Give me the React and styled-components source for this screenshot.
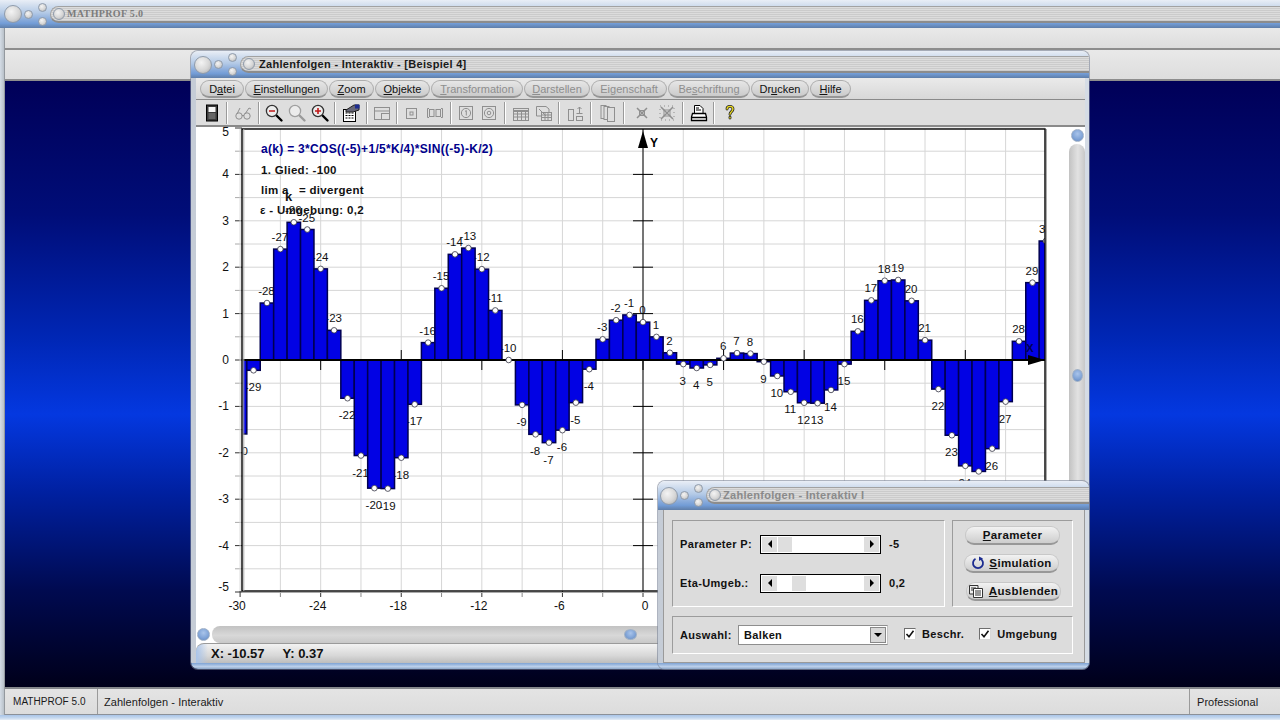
import React from "react";
import styled, { createGlobalStyle } from "styled-components";

const Global = createGlobalStyle`
  html, body { margin: 0; padding: 0; background: #000; }
  body { font-family: "Liberation Sans", Arial, sans-serif; }
`;

const stripes = `repeating-linear-gradient(180deg, #dcdcdc 0, #dcdcdc 1px, #cbcbcb 1px, #cbcbcb 2px)`;

const Screen = styled.div`
  position: relative;
  width: 1280px;
  height: 720px;
  overflow: hidden;
  display: flex;
  flex-direction: column;
  background: #d0d8e2;
`;

const TitleWrap = styled.div`
  flex: none;
  height: ${(p) => p.$h}px;
  display: flex;
  align-items: center;
  padding-left: ${(p) => p.$pad}px;
  box-sizing: border-box;
  background: linear-gradient(180deg, #e9eef6 0, #d3dfef 18%, #b4cae6 45%, #86a9da 72%, #729cd6 84%, #5f7ea8 100%);
  ${(p) => p.$round && "border-radius: 7px 7px 0 0;"}
`;

const Balls = styled.div`
  flex: none;
  display: flex;
  align-items: center;
  gap: 5px;
`;

const Ball = styled.span`
  display: block;
  flex: none;
  width: ${(p) => p.$s}px;
  height: ${(p) => p.$s}px;
  margin-right: ${(p) => p.$mr || 0}px;
  border-radius: 50%;
  box-sizing: border-box;
  border: 1px solid #8f9bab;
  background: radial-gradient(circle at 40% 35%, #f4f4f4 0, #d6d6d6 55%, #a9a9a9 100%);
`;

const BallPair = styled.div`
  display: flex;
  flex-direction: column;
  gap: 5px;
`;

const Bar = styled.div`
  flex: 1;
  height: 17px;
  margin-left: 3px;
  border-radius: 9px 0 0 9px;
  border: 1px solid #a2a2a2;
  border-bottom: 2px solid #8c8c8c;
  border-right: none;
  box-sizing: border-box;
  display: flex;
  align-items: center;
  padding-left: 2px;
  gap: ${(p) => p.$gap}px;
  background: ${stripes};
`;

const TitleText = styled.span`
  font-weight: bold;
  font-size: ${(p) => p.$size || 11}px;
  color: ${(p) => p.$color};
  letter-spacing: ${(p) => p.$ls || 0.3}px;
  font-family: ${(p) => (p.$serif ? '"Liberation Serif", serif' : '"Liberation Sans", sans-serif')};
  white-space: nowrap;
`;

function TitleBar({ h, pad, round, gap, text, color, size, ls, serif }) {
  return (
    <TitleWrap $h={h} $pad={pad} $round={round}>
      <Balls>
        <Ball $s={18} $mr={-3} />
        <Ball $s={9} />
        <BallPair>
          <Ball $s={9} />
          <Ball $s={9} />
        </BallPair>
      </Balls>
      <Bar $gap={gap}>
        <Ball $s={12} />
        <TitleText $color={color} $size={size} $ls={ls} $serif={serif}>{text}</TitleText>
      </Bar>
    </TitleWrap>
  );
}

const Body = styled.div`
  flex: 1;
  min-height: 0;
  display: flex;
`;

const LeftEdge = styled.div`
  width: 5px;
  flex: none;
  background: linear-gradient(90deg, #d4dce6, #bcc4cc 70%, #7f8388);
`;

const Column = styled.div`
  flex: 1;
  min-width: 0;
  display: flex;
  flex-direction: column;
`;

const MainRow = styled.div`
  flex: none;
  height: ${(p) => p.$h}px;
  box-sizing: border-box;
  background: linear-gradient(180deg, #e9e9e9, #dddddd);
  border-bottom: 2px solid #8d8d8d;
`;

const Desktop = styled.div`
  flex: 1;
  background: linear-gradient(180deg, #000058 0, #000d78 22%, #0026b4 42%, #0438e0 55%, #0020a0 68%, #000a50 84%, #00001a 100%);
`;

const StatusBar = styled.div`
  flex: none;
  height: 28px;
  box-sizing: border-box;
  display: flex;
  align-items: center;
  border-top: 2px solid #85888c;
  border-bottom: 1px solid #8b9098;
  background: linear-gradient(180deg, #e4e4e4, #dcdcdc);
  font-size: 11px;
  letter-spacing: 0.05px;
  color: #1a1a1a;
`;

const StatusCell = styled.div`
  box-sizing: border-box;
  padding-left: ${(p) => p.$pad}px;
  width: ${(p) => (p.$w ? `${p.$w}px` : "auto")};
  flex: ${(p) => (p.$w ? "none" : 1)};
  height: 100%;
  display: flex;
  align-items: center;
  font-size: ${(p) => p.$size || 11}px;
  border-right: ${(p) => (p.$line ? "1px solid #9a9a9a" : "none")};
`;

const BottomStrip = styled.div`
  flex: none;
  height: 5px;
  background: linear-gradient(180deg, #a9c5e8, #c6d8ee 60%, #e6edf6);
`;

const Win = styled.div`
  position: absolute;
  left: 191px;
  top: 51px;
  width: 898px;
  height: 618px;
  display: flex;
  flex-direction: column;
  border-radius: 7px;
  overflow: hidden;
  box-shadow: 0 0 0 1px rgba(120, 130, 150, 0.6);
`;

const WinBody = styled.div`
  flex: 1;
  min-height: 0;
  display: flex;
  flex-direction: column;
  padding: 0 4px 0 5px;
  background: linear-gradient(90deg, #c5ccd6, #d5dce5);
`;

const WinBottom = styled.div`
  flex: none;
  height: 6px;
  background: linear-gradient(180deg, #7ea3d4, #bcd0ea 60%, #8ba6c8);
`;

const MenuRow = styled.div`
  flex: none;
  height: 22px;
  box-sizing: border-box;
  padding: 2px 0 2px 4px;
  display: flex;
  gap: 1px;
  background: linear-gradient(180deg, #eaeaea, #d8d8d8);
  border-bottom: 1px solid #8a8a8a;
`;

const MenuPill = styled.div`
  flex: none;
  width: ${(p) => p.$w}px;
  height: 18px;
  display: flex;
  align-items: center;
  justify-content: center;
  box-sizing: border-box;
  border-radius: 9px;
  font-size: 11px;
  color: ${(p) => (p.$off ? "#8e8e8e" : "#111")};
  border: 1px solid #adadad;
  border-bottom: 2px solid #969696;
  background: linear-gradient(180deg, #e6e6e6, #cbcbcb);
  u { text-underline-offset: 1px; }
`;

const ToolRow = styled.div`
  flex: none;
  height: 27px;
  box-sizing: border-box;
  padding-left: 4px;
  display: flex;
  align-items: center;
  background: #dedede;
  border-bottom: 2px solid #8a8a8a;
`;

const ToolSlot = styled.div`
  flex: none;
  width: ${(p) => p.$w}px;
  height: 22px;
  display: flex;
  align-items: center;
  justify-content: center;
`;

const ToolSep = styled.div`
  flex: none;
  width: 8px;
  height: 22px;
  display: flex;
  justify-content: center;
  &::after {
    content: "";
    width: 1px;
    background: #9a9a9a;
    border-right: 1px solid #fff;
  }
`;

const Client = styled.div`
  flex: 1;
  min-height: 0;
  display: flex;
`;

const ChartCol = styled.div`
  flex: 1;
  min-width: 0;
  display: flex;
  flex-direction: column;
  background: #fff;
`;

const ChartSvg = styled.svg`
  display: block;
  flex: none;
  font-family: "Liberation Sans", sans-serif;
`;

const VTrack = styled.div`
  flex: none;
  width: 16px;
  position: relative;
  background: #fff;
  &::before {
    content: "";
    position: absolute;
    left: 0;
    right: 0;
    top: 17px;
    bottom: 0;
    border-radius: 8px 8px 0 0;
    background: linear-gradient(90deg, #c2c2c2, #e2e2e2 55%, #c8c8c8);
  }
`;

const Knob = styled.span`
  position: absolute;
  left: ${(p) => p.$x}px;
  top: ${(p) => p.$y}px;
  width: ${(p) => p.$w}px;
  height: ${(p) => p.$h}px;
  border-radius: 50%;
  background: radial-gradient(circle at 50% 35%, #a9c4ea 0, #7ea2d6 60%, #6285b8 100%);
  border: 1px solid #9fb0c6;
  box-sizing: border-box;
`;

const HTrack = styled.div`
  flex: none;
  height: 17px;
  position: relative;
  background: #fff;
  &::before {
    content: "";
    position: absolute;
    left: 16px;
    right: 0;
    top: 0;
    bottom: 0;
    border-radius: 8px 0 0 8px;
    background: linear-gradient(180deg, #c2c2c2, #d8d8d8 55%, #c8c8c8);
  }
`;

const CoordBar = styled.div`
  flex: none;
  height: 20px;
  box-sizing: border-box;
  margin-right: -16px;
  padding-left: 15px;
  display: flex;
  align-items: center;
  gap: 18px;
  border-top: 1px solid #9a9a9a;
  border-radius: 8px 0 0 0;
  background:
    linear-gradient(90deg, #a9c4ea 0, rgba(169, 196, 234, 0) 12px),
    linear-gradient(180deg, #f2f2f2, #d8d8d8 60%, #bdbdbd);
  font-size: 13px;
  font-weight: bold;
  color: #111;
`;

const Dialog = styled.div`
  position: absolute;
  left: 658px;
  top: 481px;
  width: 431px;
  height: 188px;
  display: flex;
  flex-direction: column;
  border-radius: 7px;
  overflow: hidden;
  box-shadow: 0 0 0 1px rgba(120, 130, 150, 0.6);
`;

const DialogBody = styled.div`
  flex: 1;
  min-height: 0;
  margin: 0 4px 0 5px;
  padding: 10px 11px 8px 8px;
  display: flex;
  flex-direction: column;
  gap: 9px;
  background: #dcdcdc;
  box-sizing: border-box;
  border: 1px solid #9a9a9a;
  border-top: none;
  font-size: 11px;
  font-weight: bold;
  letter-spacing: 0.35px;
  color: #111;
`;

const DialogFrame = styled.div`
  flex: 1;
  min-height: 0;
  display: flex;
  flex-direction: column;
  background: linear-gradient(90deg, #c5ccd6, #d5dce5);
`;

const TopPanels = styled.div`
  display: flex;
  gap: 7px;
  height: 87px;
  flex: none;
`;

const Panel = styled.div`
  box-sizing: border-box;
  width: ${(p) => (p.$w ? `${p.$w}px` : "auto")};
  height: ${(p) => (p.$h ? `${p.$h}px` : "auto")};
  flex: ${(p) => (p.$w ? "none" : "1")};
  border: 1px solid #9c9c9c;
  border-right-color: #fff;
  border-bottom-color: #fff;
`;

const ParamPanel = styled(Panel)`
  display: flex;
  flex-direction: column;
  justify-content: center;
  gap: 21px;
  padding-left: 7px;
`;

const ParamRow = styled.div`
  display: flex;
  align-items: center;
  height: 18px;
`;

const ParamLabel = styled.span`
  width: 80px;
  flex: none;
`;

const SliderBox = styled.div`
  flex: none;
  width: 121px;
  height: 19px;
  box-sizing: border-box;
  border: 1px solid #000;
  background: #fff;
  display: flex;
  align-items: stretch;
  justify-content: space-between;
  position: relative;
`;

const SliderEnd = styled.span`
  width: 15px;
  margin: 1px;
  background: #dedede;
  display: flex;
  align-items: center;
  justify-content: center;
  &::after {
    content: "";
    border-top: 4px solid transparent;
    border-bottom: 4px solid transparent;
    ${(p) => (p.$right ? "border-left: 4px solid #000;" : "border-right: 4px solid #000;")}
  }
`;

const SliderThumb = styled.span`
  position: absolute;
  top: 1px;
  bottom: 1px;
  left: ${(p) => p.$at}px;
  width: 14px;
  background: #dedede;
`;

const ParamValue = styled.span`
  margin-left: 8px;
`;

const ButtonPanel = styled(Panel)`
  display: flex;
  flex-direction: column;
  align-items: center;
  justify-content: center;
  gap: 9px;
`;

const PillButton = styled.div`
  width: 95px;
  height: 19px;
  box-sizing: border-box;
  display: flex;
  align-items: center;
  justify-content: center;
  gap: 4px;
  border-radius: 9px;
  border: 1px solid #c8c8c8;
  border-bottom: 2px solid #989898;
  margin-left: ${(p) => p.$nudge || 0}px;
  background: linear-gradient(180deg, #f2f2f2, #cdcdcd);
  font-size: 11.5px;
`;

const PickPanel = styled(Panel)`
  display: flex;
  align-items: center;
  padding-left: 7px;
`;

const PickLabel = styled.span`
  width: 58px;
  flex: none;
`;

const Combo = styled.div`
  flex: none;
  width: 150px;
  height: 20px;
  box-sizing: border-box;
  border: 1px solid #8e8e8e;
  border-right-color: #c4c4c4;
  background: #fff;
  display: flex;
  align-items: center;
  justify-content: space-between;
  padding-left: 5px;
`;

const ComboArrow = styled.span`
  width: 16px;
  height: 16px;
  margin-right: 1px;
  box-sizing: border-box;
  border: 1px solid #888;
  background: #d8d8d8;
  display: flex;
  align-items: center;
  justify-content: center;
  &::after {
    content: "";
    border-left: 4px solid transparent;
    border-right: 4px solid transparent;
    border-top: 4px solid #000;
  }
`;

const CheckWrap = styled.label`
  display: flex;
  align-items: center;
  gap: 6px;
  margin-left: ${(p) => p.$ml}px;
  margin-top: -2px;
`;

const CheckBox = styled.span`
  width: 12px;
  height: 12px;
  box-sizing: border-box;
  display: flex;
  border: 1px solid #6e6e6e;
  border-right-color: #d8d8d8;
  border-bottom-color: #d8d8d8;
  background: #fff;
`;

// chart helpers: page coordinates go straight in the viewBox
const X0 = 643;
const Y0 = 360;
const UX = 13.43;
const UY = 46.4;
const L = 242;
const R = 1045;
const T = 129;
const B = 591;
const px = (k) => X0 + k * UX;
const py = (v) => Y0 - v * UY;
const seq = (from, to, step = 1) => {
  const out = [];
  for (let i = from; i <= to; i += step) out.push(i);
  return out;
};
const fn = (k) => 3 * Math.cos(-5 + k / 20) * Math.sin(-5 - k / 2);
const points = seq(-30, 30).map((k) => ({ k, v: fn(k) }));

function Chart() {
  return (
    <ChartSvg width="873" height="499" viewBox="196 127 873 499">
      <defs>
        <clipPath id="plot">
          <rect x={L + 1} y={T} width={R - L - 1} height={B - T} />
        </clipPath>
      </defs>
      {seq(-10, 10).map((n) => (
        <g key={n}>
          <line x1={L} x2={R} y1={py(n / 2)} y2={py(n / 2)} stroke="#d6d6d6" />
          <line x1={235} x2={L} y1={py(n / 2)} y2={py(n / 2)} stroke={n % 2 === 0 ? "#333" : "#aaa"} />
        </g>
      ))}
      {seq(-10, 10).map((n) => (
        <g key={n}>
          <line x1={px(n * 3)} x2={px(n * 3)} y1={T} y2={B} stroke="#d6d6d6" />
          <line x1={px(n * 3)} x2={px(n * 3)} y1={B} y2={B + 6} stroke={n % 2 === 0 ? "#333" : "#888"} />
        </g>
      ))}
      {seq(-5, 5).map((v) => (
        <text key={v} x={229} y={(v === 5 ? 132 : v === -5 ? 587 : py(v)) + 4} fontSize="12" textAnchor="end" fill="#111">{v}</text>
      ))}
      {seq(-5, 5).map((n) => (
        <text key={n} x={px(n * 6) + (n < 0 ? -3 : 2)} y={610} fontSize="12" textAnchor="middle" fill="#111">{n * 6}</text>
      ))}
      <g clipPath="url(#plot)">
        {seq(-4, 4).map((v) => (
          <line key={v} x1={X0 - 10} x2={X0 + 10} y1={py(v)} y2={py(v)} stroke="#000" />
        ))}
        {seq(-4, 4).map((n) => (
          <line key={n} x1={px(n * 6)} x2={px(n * 6)} y1={Y0 - 10} y2={Y0 + 10} stroke="#000" />
        ))}
        {points.map(({ k, v }) => (
          <text key={k} x={px(k) - 0.5} y={v >= 0 ? py(v) - 8 : py(v) + 21} fontSize="11.5" textAnchor="middle" fill="#111">{k}</text>
        ))}
        <line x1={X0} x2={X0} y1={T} y2={B} stroke="#000" />
        {points.map(({ k, v }) => (
          <rect
            key={k}
            x={px(k) - UX / 2}
            y={Math.min(Y0, py(v))}
            width={UX}
            height={Math.abs(v * UY)}
            fill="#0202e4"
            stroke="#000050"
            strokeWidth="1.5"
          />
        ))}
        <line x1={L} x2={R} y1={Y0} y2={Y0} stroke="#000" strokeWidth="2" />
        {points.map(({ k, v }) => (
          <circle key={k} cx={px(k)} cy={py(v)} r="2.8" fill="#fff" stroke="#334" strokeWidth="0.8" />
        ))}
        <text x={1030} y={352} fontSize="11" fontWeight="bold" fill="#000050" textAnchor="middle">X</text>
      </g>
      <path d="M1028 355 L1045 360 L1028 365 Z" fill="#000" />
      <path d="M643 131 L648 148 L638 148 Z" fill="#000" />
      <text x={650} y={147} fontSize="12" fontWeight="bold" fill="#000">Y</text>
      <rect x={L} y={T} width={R - L} height={B - T} fill="none" stroke="#000" strokeWidth="1.4" />
      <line x1={L + 1.8} x2={L + 1.8} y1={T} y2={B} stroke="#aaa" />
      <line x1={L} x2={R} y1={B + 1.5} y2={B + 1.5} stroke="#aaa" />
      <line x1={R + 1.5} x2={R + 1.5} y1={T} y2={B} stroke="#aaa" />
      <g fontSize="11.5" fontWeight="bold" letterSpacing="0.3">
        <text x={261} y={153} fill="#00008c" fontSize="12">a(k) = 3*COS((-5)+1/5*K/4)*SIN((-5)-K/2)</text>
        <text x={261} y={174} fill="#111">1. Glied: -100</text>
        <text x={261} y={194} fill="#111">lim a</text>
        <text x={285} y={201} fill="#111" fontSize="13">k</text>
        <text x={299} y={194} fill="#111">= divergent</text>
        <text x={260} y={214} fill="#111">ε - Umgebung: 0,2</text>
      </g>
    </ChartSvg>
  );
}

const gr = "#8f8f8f";

const Glass = ({ tone, sign }) => (
  <svg width="20" height="20" viewBox="0 0 20 20">
    <line x1="11" y1="11" x2="17.5" y2="17.5" stroke={tone} strokeWidth="2.4" strokeLinecap="round" />
    <circle cx="8" cy="8" r="5.6" fill="#ececec" stroke={tone === "#000" ? "#333" : "#a0a0a0"} strokeWidth="1.3" />
    {sign && <line x1="5" y1="8" x2="11" y2="8" stroke="#c01818" strokeWidth="1.6" />}
    {sign === "+" && <line x1="8" y1="5" x2="8" y2="11" stroke="#c01818" strokeWidth="1.6" />}
  </svg>
);

const Gray = ({ children, w = 20 }) => (
  <svg width={w} height="20" viewBox={`0 0 ${w} 20`} fill="none" stroke={gr} strokeWidth="1">
    {children}
  </svg>
);

const toolItems = [
  { w: 23, icon: (
    <svg width="14" height="18" viewBox="0 0 14 18">
      <rect x="1.5" y="1" width="11" height="16" fill="#3a3a3a" stroke="#000" />
      <rect x="3.5" y="3" width="7" height="5" fill="#f4f4f4" />
      <rect x="3.5" y="9" width="7" height="6" fill="#666" />
    </svg>
  ) },
  { sep: true },
  { w: 24, icon: (
    <Gray>
      <circle cx="6" cy="13" r="3.2" />
      <circle cx="14" cy="13" r="3.2" />
      <path d="M9 13 Q10 11 11 13 M4 11 L7 5 M12 11 L16 5 L18 6" />
    </Gray>
  ) },
  { sep: true },
  { w: 22, icon: <Glass tone="#000" sign="-" /> },
  { w: 23, icon: <Glass tone="#9a9a9a" /> },
  { w: 23, icon: <Glass tone="#000" sign="+" /> },
  { sep: true },
  { w: 24, icon: (
    <svg width="20" height="20" viewBox="0 0 20 20">
      <rect x="2.5" y="6.5" width="12" height="12" fill="#fff" stroke="#000" />
      <path d="M4.5 10 H12.5 M4.5 12.5 H12.5 M4.5 15 H12.5" stroke="#000" strokeDasharray="2 1" />
      <path d="M5 7 L13 2 L18 2 L18 7 L12 9 L5 9 Z" fill="#667" stroke="#222" />
      <rect x="14" y="1.5" width="4.5" height="4" fill="#1c2c90" />
    </svg>
  ) },
  { sep: true },
  { w: 22, icon: (
    <Gray>
      <rect x="2.5" y="4.5" width="15" height="12" />
      <path d="M2.5 8 H17.5" />
      <rect x="9.5" y="10.5" width="8" height="6" />
    </Gray>
  ) },
  { sep: true },
  { w: 22, icon: (
    <Gray>
      <rect x="4.5" y="5.5" width="10" height="10" />
      <rect x="8" y="9" width="3" height="3" />
    </Gray>
  ) },
  { w: 24, icon: (
    <Gray>
      <path d="M4 5.5 H2.5 V14.5 H4 M16 5.5 H17.5 V14.5 H16" />
      <rect x="4.5" y="6.5" width="4.5" height="7" />
      <rect x="11" y="6.5" width="4.5" height="7" />
    </Gray>
  ) },
  { sep: true },
  { w: 22, icon: (
    <Gray>
      <rect x="3.5" y="3.5" width="13" height="13" />
      <circle cx="10" cy="10" r="4.6" />
      <path d="M9 8.5 L10.3 7.5 V12.5" />
    </Gray>
  ) },
  { w: 24, icon: (
    <Gray>
      <rect x="3.5" y="3.5" width="13" height="13" />
      <circle cx="10" cy="10" r="4.6" />
      <circle cx="10" cy="10" r="1.8" />
    </Gray>
  ) },
  { sep: true },
  { w: 24, icon: (
    <Gray>
      <rect x="2.5" y="5.5" width="15" height="12" />
      <path d="M2.5 8 H17.5" strokeWidth="2" />
      <path d="M2.5 11 H17.5 M2.5 14 H17.5 M6.5 8 V17.5 M10.5 8 V17.5 M14.5 8 V17.5" />
    </Gray>
  ) },
  { w: 22, icon: (
    <Gray>
      <path d="M2.5 3.5 H12 L15 6 V10 M2.5 3.5 V13 H7" />
      <rect x="7.5" y="9.5" width="10" height="8" />
      <path d="M7.5 12 H17.5 M7.5 14.5 H17.5 M11 9.5 V17.5 M14 9.5 V17.5 M5 6 L12 13" />
    </Gray>
  ) },
  { sep: true },
  { w: 24, icon: (
    <Gray>
      <rect x="3.5" y="6.5" width="5" height="11" />
      <rect x="11.5" y="13.5" width="6" height="4" />
      <path d="M14.5 11 V4 M12.5 6 L14.5 4 L16.5 6 M11.5 10.5 H17.5" />
    </Gray>
  ) },
  { sep: true },
  { w: 25, icon: (
    <Gray>
      <rect x="3" y="2.5" width="5" height="13" />
      <rect x="6" y="3.5" width="5" height="13" fill="#dedede" />
      <rect x="9.5" y="4.5" width="7" height="14" fill="#dedede" />
    </Gray>
  ) },
  { sep: true },
  { w: 27, icon: (
    <Gray>
      <path d="M5 5 L15 15 M15 5 L5 15" strokeWidth="1.5" />
      <rect x="7.5" y="7.5" width="5" height="5" />
    </Gray>
  ) },
  { w: 24, icon: (
    <Gray>
      <path d="M4 4 L16 16 M16 4 L4 16" strokeWidth="1.5" />
      <rect x="7" y="7" width="6" height="6" />
      <rect x="3" y="3" width="14" height="14" strokeDasharray="1 3" />
    </Gray>
  ) },
  { sep: true },
  { w: 23, icon: (
    <svg width="20" height="20" viewBox="0 0 20 20" fill="none" stroke="#000">
      <path d="M5.5 10 V2.5 H11 L14 5.5 V10" fill="#fff" />
      <path d="M7 5 H10 M7 7 H12" />
      <path d="M3.5 10.5 H16.5 L17.5 14 V17.5 H2.5 V14 Z" fill="#fff" strokeWidth="1.3" />
      <path d="M2.5 14.5 H17.5" strokeWidth="1.6" />
    </svg>
  ) },
  { sep: true },
  { w: 24, icon: (
    <svg width="14" height="17" viewBox="0 0 14 20" fill="none" strokeLinecap="round">
      <path d="M3.5 6 C3.5 1.8 10.5 1.8 10.5 6 C10.5 9 7 9 7 12 M7 15.5 V16.5" stroke="#222" strokeWidth="3.4" />
      <path d="M3.5 6 C3.5 1.8 10.5 1.8 10.5 6 C10.5 9 7 9 7 12 M7 15.5 V16.5" stroke="#e8d820" strokeWidth="1.6" />
    </svg>
  ) },
];

const menus = [
  { w: 44, a: "D", u: "a", b: "tei" },
  { w: 83, a: "", u: "E", b: "instellungen" },
  { w: 45, a: "", u: "Z", b: "oom" },
  { w: 55, a: "", u: "O", b: "bjekte" },
  { w: 92, a: "", u: "T", b: "ransformation", off: true },
  { w: 66, a: "", u: "D", b: "arstellen", off: true },
  { w: 76, a: "Ei", u: "g", b: "enschaft", off: true },
  { w: 82, a: "Be", u: "s", b: "chriftung", off: true },
  { w: 58, a: "Dr", u: "u", b: "cken" },
  { w: 41, a: "", u: "H", b: "ilfe" },
];

function Slider({ at }) {
  return (
    <SliderBox>
      <SliderEnd />
      <SliderThumb $at={at} />
      <SliderEnd $right />
    </SliderBox>
  );
}

function Check({ ml, children }) {
  return (
    <CheckWrap $ml={ml}>
      <CheckBox>
        <svg width="10" height="10" viewBox="0 0 10 10" fill="none">
          <path d="M1.5 5 L4 7.8 L8.5 1.8" stroke="#111" strokeWidth="1.6" />
        </svg>
      </CheckBox>
      {children}
    </CheckWrap>
  );
}

export default function App() {
  return (
    <Screen>
      <Global />
      <TitleBar h={28} pad={4} gap={2} text="MATHPROF 5.0" color="#7c7c7c" size={10} ls={0.35} serif />
      <Body>
        <LeftEdge />
        <Column>
          <MainRow $h={22} />
          <MainRow $h={31} />
          <Desktop />
          <StatusBar>
            <StatusCell $w={93} $pad={8} $size={10} $line>MATHPROF 5.0</StatusCell>
            <StatusCell $pad={6} $line>Zahlenfolgen - Interaktiv</StatusCell>
            <StatusCell $w={90} $pad={7}>Professional</StatusCell>
          </StatusBar>
        </Column>
      </Body>
      <BottomStrip />

      <Win>
        <TitleBar h={27} pad={3} round gap={4} text="Zahlenfolgen - Interaktiv - [Beispiel 4]" color="#1a1a1a" />
        <WinBody>
          <MenuRow>
            {menus.map((m) => (
              <MenuPill key={m.u + m.b} $w={m.w} $off={m.off}>
                <span>{m.a}<u>{m.u}</u>{m.b}</span>
              </MenuPill>
            ))}
          </MenuRow>
          <ToolRow>
            {toolItems.map((t, i) =>
              t.sep ? <ToolSep key={i} /> : <ToolSlot key={i} $w={t.w}>{t.icon}</ToolSlot>
            )}
          </ToolRow>
          <Client>
            <ChartCol>
              <Chart />
              <HTrack>
                <Knob $x={1} $y={2} $w={13} $h={13} />
                <Knob $x={428} $y={3} $w={13} $h={11} />
              </HTrack>
              <CoordBar>
                <span>X: -10.57</span>
                <span>Y: 0.37</span>
              </CoordBar>
            </ChartCol>
            <VTrack>
              <Knob $x={2} $y={2} $w={13} $h={13} />
              <Knob $x={3} $y={242} $w={11} $h={13} />
            </VTrack>
          </Client>
        </WinBody>
        <WinBottom />
      </Win>

      <Dialog>
        <TitleBar h={29} pad={2} round gap={2} text="Zahlenfolgen - Interaktiv I" color="#8a8a8a" />
        <DialogFrame>
          <DialogBody>
            <TopPanels>
              <ParamPanel $w={273}>
                <ParamRow>
                  <ParamLabel>Parameter P:</ParamLabel>
                  <Slider at={17} />
                  <ParamValue>-5</ParamValue>
                </ParamRow>
                <ParamRow>
                  <ParamLabel>Eta-Umgeb.:</ParamLabel>
                  <Slider at={31} />
                  <ParamValue>0,2</ParamValue>
                </ParamRow>
              </ParamPanel>
              <ButtonPanel $w={121}>
                <PillButton><span><u>P</u>arameter</span></PillButton>
                <PillButton $nudge={-2}>
                  <svg width="14" height="14" viewBox="0 0 14 14" fill="none">
                    <path d="M4.5 2.8 A5 5 0 1 0 9.5 2.8" stroke="#1c2c90" strokeWidth="1.8" />
                    <path d="M8 0.5 L8 5 L12 2.5 Z" fill="#1c2c90" />
                  </svg>
                  <span><u>S</u>imulation</span>
                </PillButton>
                <PillButton $nudge={1}>
                  <svg width="17" height="16" viewBox="0 0 17 16" fill="none" stroke="#333">
                    <path d="M1.5 2.5 H10 V11 H1.5 Z" fill="#eee" />
                    <path d="M3 5 H8 M3 7 H5" />
                    <path d="M5.5 5.5 H14.5 V14.5 H5.5 Z" fill="#fff" />
                    <path d="M7 8 H13 M7 10 H13 M7 12 H13" />
                  </svg>
                  <span><u>A</u>usblenden</span>
                </PillButton>
              </ButtonPanel>
            </TopPanels>
            <PickPanel $h={35}>
              <PickLabel>Auswahl:</PickLabel>
              <Combo>
                <span>Balken</span>
                <ComboArrow />
              </Combo>
              <Check ml={16}>Beschr.</Check>
              <Check ml={15}>Umgebung</Check>
            </PickPanel>
          </DialogBody>
        </DialogFrame>
        <WinBottom />
      </Dialog>
    </Screen>
  );
}
